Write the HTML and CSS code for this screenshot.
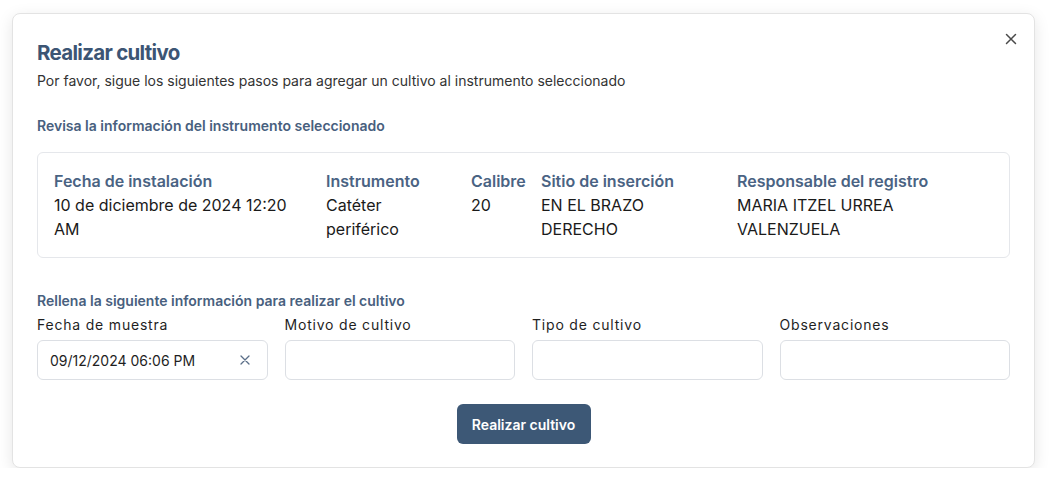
FILE: index.html
```html
<!DOCTYPE html>
<html lang="es">
<head>
<meta charset="utf-8">
<title>Realizar cultivo</title>
<link rel="stylesheet" href="styles.css">
</head>
<body>
<div class="modal">
  <button class="close" aria-label="Cerrar">
    <svg width="12" height="12" viewBox="0 0 12 12"><path d="M1.5 1.5 L10.5 10.5 M10.5 1.5 L1.5 10.5" stroke="#4a4a4a" stroke-width="1.5" stroke-linecap="round"/></svg>
  </button>
  <h1 class="title">Realizar cultivo</h1>
  <p class="subtitle">Por favor, sigue los siguientes pasos para agregar un cultivo al instrumento seleccionado</p>

  <h2 class="section">Revisa la información del instrumento seleccionado</h2>
  <div class="card">
    <div class="col">
      <div class="label">Fecha de instalación</div>
      <div class="value">10 de diciembre de 2024 12:20 AM</div>
    </div>
    <div class="col">
      <div class="label">Instrumento</div>
      <div class="value">Catéter periférico</div>
    </div>
    <div class="col">
      <div class="label">Calibre</div>
      <div class="value">20</div>
    </div>
    <div class="col">
      <div class="label">Sitio de inserción</div>
      <div class="value">EN EL BRAZO DERECHO</div>
    </div>
    <div class="col">
      <div class="label">Responsable del registro</div>
      <div class="value">MARIA ITZEL URREA VALENZUELA</div>
    </div>
  </div>

  <h2 class="section section-2">Rellena la siguiente información para realizar el cultivo</h2>
  <div class="fields">
    <div class="field">
      <label class="flabel">Fecha de muestra</label>
      <div class="input">
        <span class="input-text">09/12/2024 06:06 PM</span>
        <svg class="clear" width="10" height="10" viewBox="0 0 10 10"><path d="M1 1 L9 9 M9 1 L1 9" stroke="#5b6f88" stroke-width="1.3" stroke-linecap="round"/></svg>
      </div>
    </div>
    <div class="field">
      <label class="flabel">Motivo de cultivo</label>
      <div class="input"></div>
    </div>
    <div class="field">
      <label class="flabel">Tipo de cultivo</label>
      <div class="input"></div>
    </div>
    <div class="field">
      <label class="flabel">Observaciones</label>
      <div class="input"></div>
    </div>
  </div>

  <div class="actions">
    <button class="primary">Realizar cultivo</button>
  </div>
</div>
</body>
</html>
```

FILE: styles.css
```css
* { box-sizing: border-box; }
html, body { margin: 0; background: #ffffff; }
body {
  padding: 13px 17px 0 12px;
  font-family: Inter, "Noto Sans", "Liberation Sans", sans-serif;
  color: #1f1f1f;
}
.modal {
  position: relative;
  width: 1023px;
  height: 455px;
  background: #fff;
  border: 1px solid #e3e3e3;
  border-radius: 8px;
  box-shadow: 0 4px 16px rgba(0,0,0,0.10);
  padding: 25px 24px 24px 24px;
}
.close {
  position: absolute;
  top: 15px;
  right: 13px;
  width: 20px;
  height: 20px;
  border: 0;
  background: transparent;
  padding: 0;
  display: flex;
  align-items: center;
  justify-content: center;
}
.title {
  margin: 0;
  font-size: 20.5px;
  line-height: 28px;
  font-weight: 700;
  color: #3c5574;
  letter-spacing: -0.7px;
}
.subtitle {
  margin: 4px 0 0;
  font-size: 14px;
  line-height: 20px;
  color: #333;
}
.section {
  margin: 25px 0 0;
  font-size: 14px;
  line-height: 20px;
  font-weight: 600;
  color: #48607e;
}
.card {
  margin-top: 16px;
  border: 1px solid #e5e7eb;
  border-radius: 6px;
  padding: 16px;
  display: grid;
  grid-template-columns: 256px 129px 54px 180px 1fr;
  column-gap: 16px;
}
.label {
  font-size: 16px;
  line-height: 24px;
  font-weight: 600;
  color: #4a6383;
}
.value {
  font-size: 16px;
  line-height: 24px;
  color: #1a1a1a;
}
.section-2 { margin-top: 33px; }
.fields {
  margin-top: 4px;
  display: grid;
  grid-template-columns: repeat(4, 1fr);
  column-gap: 17px;
}
.flabel {
  display: block;
  font-size: 14px;
  line-height: 20px;
  color: #1f1f1f;
  letter-spacing: 0.8px;
}
.input {
  margin-top: 5px;
  height: 40px;
  border: 1px solid #dcdfe4;
  border-radius: 6px;
  display: flex;
  align-items: center;
  justify-content: space-between;
  padding: 0 17px 0 12px;
}
.input-text {
  font-size: 14px;
  color: #1f1f1f;
}
.actions {
  margin-top: 24px;
  display: flex;
  justify-content: center;
}
.primary {
  height: 40px;
  width: 134px;
  border: 0;
  border-radius: 6px;
  background: #3d5876;
  color: #fff;
  font-family: Inter, "Noto Sans", "Liberation Sans", sans-serif;
  font-size: 14px;
  font-weight: 600;
}
```
